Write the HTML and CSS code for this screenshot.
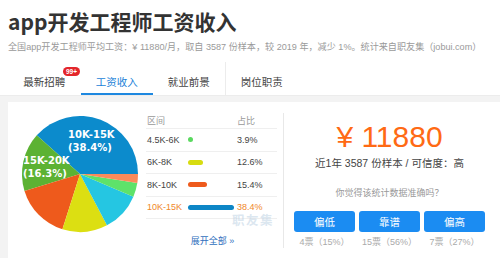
FILE: index.html
```html
<!DOCTYPE html>
<html lang="zh-CN">
<head>
<meta charset="utf-8">
<title>app开发工程师工资收入</title>
<link rel="stylesheet" href="styles.css">
</head>
<body>
<div class="page">
  <h1 class="title">app开发工程师工资收入</h1>
  <p class="sub">全国app开发工程师平均工资：¥ 11880/月，取自 3587 份样本，较 2019 年，减少 1%。统计来自职友集（jobui.com）</p>
  <div class="tabs">
    <div class="tab">最新招聘<span class="badge">99+</span></div>
    <div class="tab active">工资收入</div>
    <div class="tab sep">就业前景</div>
    <div class="tab">岗位职责</div>
  </div>
  <div class="main">
    <div class="card">
      <svg class="pie" width="138" height="140" viewBox="0 0 138 140">
        <path d="M72,72 L130,72 A58,58 0 0 0 28.75,33.36 Z" fill="#0c8bcc"/>
        <path d="M72,72 L28.75,33.36 A58,58 0 0 0 16.51,88.88 Z" fill="#5cb233"/>
        <path d="M72,72 L16.51,88.88 A58,58 0 0 0 54.43,127.27 Z" fill="#ee5a1c"/>
        <path d="M72,72 L54.43,127.27 A58,58 0 0 0 98.98,123.35 Z" fill="#dcdf12"/>
        <path d="M72,72 L98.98,123.35 A58,58 0 0 0 125.37,94.70 Z" fill="#25c6e2"/>
        <path d="M72,72 L125.37,94.70 A58,58 0 0 0 129.29,81.07 Z" fill="#5ee26a"/>
        <path d="M72,72 L129.29,81.07 A58,58 0 0 0 130,72 Z" fill="#fb8a5a"/>
        <text class="plabel" x="60" y="36">10K-15K</text>
        <text class="plabel" x="60" y="48.5">(38.4%)</text>
        <text class="plabel" x="15" y="62">15K-20K</text>
        <text class="plabel" x="15" y="74.5">(16.3%)</text>
      </svg>
      <div class="dist">
        <div class="row head"><span>区间</span><span></span><span>占比</span></div>
        <div class="row"><span>4.5K-6K</span><span><i class="bar c1" style="width:5px"></i></span><span>3.9%</span></div>
        <div class="row"><span>6K-8K</span><span><i class="bar c2" style="width:15px"></i></span><span>12.6%</span></div>
        <div class="row"><span>8K-10K</span><span><i class="bar c3" style="width:19px"></i></span><span>15.4%</span></div>
        <div class="row hl"><span>10K-15K</span><span><i class="bar c4" style="width:46px"></i></span><span>38.4%</span></div>
        <div class="more">展开全部 »</div>
        <div class="mark">职友集</div>
      </div>
      <div class="stats">
        <div class="amount">¥ 11880</div>
        <div class="meta">近1年 3587 份样本 / 可信度：高</div>
        <div class="ask">你觉得该统计数据准确吗？</div>
        <div class="votes">
          <div class="vote"><button class="btn">偏低</button><span>4票（15%）</span></div>
          <div class="vote"><button class="btn">靠谱</button><span>15票（56%）</span></div>
          <div class="vote"><button class="btn">偏高</button><span>7票（27%）</span></div>
        </div>
      </div>
    </div>
  </div>
</div>
</body>
</html>
```
FILE: styles.css
```css
* { box-sizing: border-box; }
html, body { margin: 0; padding: 0; background: #fff; }
body {
  font-family: "Liberation Sans", "Noto Sans CJK SC", sans-serif;
  color: #333;
  width: 500px;
  height: 258px;
  overflow: hidden;
}
.title {
  margin: 0;
  padding: 7px 8px 0;
  font-family: "Noto Sans CJK SC", "Liberation Sans", sans-serif;
  font-size: 21px;
  line-height: 28px;
  font-weight: 700;
  color: #333;
}
.sub {
  margin: 5px 0 0;
  padding: 0 8px;
  font-size: 9.1px;
  line-height: 14px;
  color: #9a9a9a;
  white-space: nowrap;
}
.tabs {
  display: flex;
  margin: 8px 0 0;
  padding-left: 8px;
  height: 34px;
  border-bottom: 1px solid #ececec;
}
.tab {
  position: relative;
  width: 72.5px;
  height: 33px;
  padding-top: 8px;
  line-height: 24px;
  text-align: center;
  font-size: 10.5px;
  color: #444;
}
.tab.active {
  color: #1a7fd8;
  border-bottom: 2px solid #1e88e0;
}
.tab.sep { border-right: 1px solid #ececec; }
.badge {
  position: absolute;
  left: 55px;
  top: 5px;
  width: 17px;
  height: 9px;
  border-radius: 5px;
  background: #e3262b;
  color: #fff;
  font-size: 6.5px;
  font-weight: 700;
  line-height: 9px;
  text-align: center;
}
.main {
  background: #f3f3f3;
  padding: 6px 0 0 8px;
  height: 162px;
}
.card {
  display: flex;
  background: #fff;
  height: 156px;
}
.pie { display: block; flex: none; }
.plabel {
  font-family: "DejaVu Sans", sans-serif;
  font-weight: 700;
  font-size: 10px;
  fill: #fff;
}
.dist {
  position: relative;
  width: 131px;
  margin-right: 6px;
  padding-top: 11px;
  flex: none;
}
.row {
  display: grid;
  grid-template-columns: 41px 49px 1fr;
  align-items: center;
  height: 22.5px;
  border-bottom: 1px solid #efefef;
  font-size: 9px;
  line-height: 10px;
  color: #444;
  padding-left: 1px;
}
.row.head { height: 16px; color: #999; }
.row.hl { color: #f0882a; }
.bar {
  display: block;
  height: 5px;
  border-radius: 3px;
}
.c1 { background: #5ad95f; }
.c2 { background: #d7dc10; }
.c3 { background: #ee5a1c; }
.c4 { background: #0d86c6; }
.more {
  margin-top: 15px;
  line-height: 15px;
  font-size: 9px;
  color: #2f6fbd;
  text-align: center;
  padding-left: 2px;
}
.mark {
  position: absolute;
  left: 86px;
  top: 113px;
  font-size: 12.5px;
  line-height: 12px;
  font-weight: 700;
  color: rgba(190, 210, 228, 0.55);
  letter-spacing: 1.5px;
}
.stats {
  width: 212px;
  height: 135px;
  margin-top: 11px;
  border-left: 1px solid #e8e8e8;
  display: flex;
  flex-direction: column;
  align-items: center;
  padding-top: 7px;
}
.amount {
  font-size: 30px;
  line-height: 34px;
  color: #ff6a14;
}
.meta {
  margin-top: 1px;
  font-size: 10.5px;
  line-height: 16px;
  color: #444;
}
.ask {
  margin-top: 15px;
  font-size: 9px;
  line-height: 14px;
  color: #999;
}
.votes {
  display: flex;
  gap: 4px;
  margin-top: 11px;
}
.vote {
  display: flex;
  flex-direction: column;
  align-items: center;
  width: 61px;
}
.btn {
  width: 61px;
  height: 21px;
  border: 0;
  border-radius: 3px;
  background: #1b8cf2;
  color: #fff;
  font-family: "Noto Sans CJK SC", sans-serif;
  font-size: 10.5px;
  padding: 0;
}
.vote span {
  margin-top: 4px;
  font-size: 9px;
  line-height: 12px;
  color: #aaa;
  white-space: nowrap;
}
```
